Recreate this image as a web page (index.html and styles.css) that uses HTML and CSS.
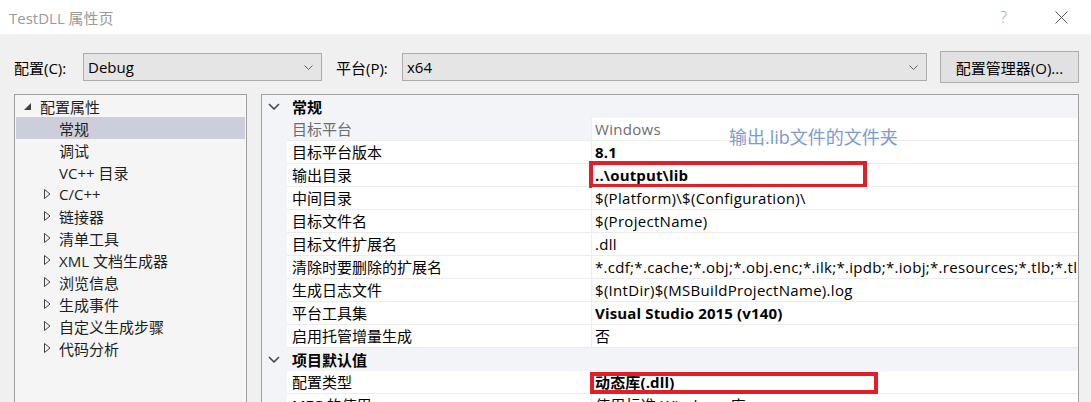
FILE: index.html
```html
<!DOCTYPE html>
<html>
<head>
    <meta charset="UTF-8">
    <title>TestDLL 属性页</title>
    <link rel="stylesheet" href="styles.css">
</head>
<body>
<div class="titlebar">
    <span class="title">TestDLL 属性页</span>
    <span class="help">?</span>
    <svg class="close" width="13" height="13" viewBox="0 0 13 13">
        <path d="M0.5 0.5 L12.5 12.5 M12.5 0.5 L0.5 12.5" stroke="#555" stroke-width="1" fill="none"/>
    </svg>
</div>
<div class="dialog">
    <div class="toolbar">
        <label class="lbl lbl-config">配置(C):</label>
        <div class="combo combo-config">
            <span>Debug</span>
            <svg width="9" height="5" viewBox="0 0 9 5"><path d="M0.5 0.5 L4.5 4.5 L8.5 0.5" stroke="#606060" fill="none"/></svg>
        </div>
        <label class="lbl lbl-platform">平台(P):</label>
        <div class="combo combo-platform">
            <span>x64</span>
            <svg width="9" height="5" viewBox="0 0 9 5"><path d="M0.5 0.5 L4.5 4.5 L8.5 0.5" stroke="#606060" fill="none"/></svg>
        </div>
        <button class="btn">配置管理器(O)...</button>
    </div>

    <div class="panes">
        <ul class="tree">
            <li class="node top"><span class="arrow"><svg width="7" height="7" viewBox="0 0 7 7"><path d="M7 0 L7 7 L0 7 Z" fill="#404040"/></svg></span>配置属性</li>
            <li class="node selected"><span class="arrow"></span>常规</li>
            <li class="node"><span class="arrow"></span>调试</li>
            <li class="node"><span class="arrow"></span>VC++ 目录</li>
            <li class="node"><span class="arrow"><svg width="7" height="10" viewBox="0 0 7 10"><path d="M0.5 0.5 L6 5 L0.5 9.5 Z" stroke="#404040" fill="none"/></svg></span>C/C++</li>
            <li class="node"><span class="arrow"><svg width="7" height="10" viewBox="0 0 7 10"><path d="M0.5 0.5 L6 5 L0.5 9.5 Z" stroke="#404040" fill="none"/></svg></span>链接器</li>
            <li class="node"><span class="arrow"><svg width="7" height="10" viewBox="0 0 7 10"><path d="M0.5 0.5 L6 5 L0.5 9.5 Z" stroke="#404040" fill="none"/></svg></span>清单工具</li>
            <li class="node"><span class="arrow"><svg width="7" height="10" viewBox="0 0 7 10"><path d="M0.5 0.5 L6 5 L0.5 9.5 Z" stroke="#404040" fill="none"/></svg></span>XML 文档生成器</li>
            <li class="node"><span class="arrow"><svg width="7" height="10" viewBox="0 0 7 10"><path d="M0.5 0.5 L6 5 L0.5 9.5 Z" stroke="#404040" fill="none"/></svg></span>浏览信息</li>
            <li class="node"><span class="arrow"><svg width="7" height="10" viewBox="0 0 7 10"><path d="M0.5 0.5 L6 5 L0.5 9.5 Z" stroke="#404040" fill="none"/></svg></span>生成事件</li>
            <li class="node"><span class="arrow"><svg width="7" height="10" viewBox="0 0 7 10"><path d="M0.5 0.5 L6 5 L0.5 9.5 Z" stroke="#404040" fill="none"/></svg></span>自定义生成步骤</li>
            <li class="node"><span class="arrow"><svg width="7" height="10" viewBox="0 0 7 10"><path d="M0.5 0.5 L6 5 L0.5 9.5 Z" stroke="#404040" fill="none"/></svg></span>代码分析</li>
        </ul>

        <div class="grid">
            <div class="cat">
                <span class="gutter"><svg width="12" height="7" viewBox="0 0 12 7"><path d="M1 1 L6 6 L11 1" stroke="#404040" stroke-width="1.5" fill="none"/></svg></span>
                <span class="cat-name">常规</span>
            </div>
            <div class="row readonly">
                <span class="gutter"></span>
                <span class="name">目标平台</span>
                <span class="value">Windows</span>
            </div>
            <div class="row">
                <span class="gutter"></span>
                <span class="name">目标平台版本</span>
                <span class="value bold">8.1</span>
            </div>
            <div class="row">
                <span class="gutter"></span>
                <span class="name">输出目录</span>
                <span class="value bold">..\output\lib<span class="mark mark-out"></span></span>
            </div>
            <div class="row">
                <span class="gutter"></span>
                <span class="name">中间目录</span>
                <span class="value">$(Platform)\$(Configuration)\</span>
            </div>
            <div class="row">
                <span class="gutter"></span>
                <span class="name">目标文件名</span>
                <span class="value">$(ProjectName)</span>
            </div>
            <div class="row">
                <span class="gutter"></span>
                <span class="name">目标文件扩展名</span>
                <span class="value">.dll</span>
            </div>
            <div class="row">
                <span class="gutter"></span>
                <span class="name">清除时要删除的扩展名</span>
                <span class="value clip">*.cdf;*.cache;*.obj;*.obj.enc;*.ilk;*.ipdb;*.iobj;*.resources;*.tlb;*.tli;*.tlh;*.tmp;*.rsp;*.pgc;*.pgd</span>
            </div>
            <div class="row">
                <span class="gutter"></span>
                <span class="name">生成日志文件</span>
                <span class="value">$(IntDir)$(MSBuildProjectName).log</span>
            </div>
            <div class="row">
                <span class="gutter"></span>
                <span class="name">平台工具集</span>
                <span class="value bold">Visual Studio 2015 (v140)</span>
            </div>
            <div class="row">
                <span class="gutter"></span>
                <span class="name">启用托管增量生成</span>
                <span class="value">否</span>
            </div>
            <div class="cat">
                <span class="gutter"><svg width="12" height="7" viewBox="0 0 12 7"><path d="M1 1 L6 6 L11 1" stroke="#404040" stroke-width="1.5" fill="none"/></svg></span>
                <span class="cat-name">项目默认值</span>
            </div>
            <div class="row">
                <span class="gutter"></span>
                <span class="name">配置类型</span>
                <span class="value bold">动态库(.dll)<span class="mark mark-type"></span></span>
            </div>
            <div class="row">
                <span class="gutter"></span>
                <span class="name">MFC 的使用</span>
                <span class="value">使用标准 Windows 库</span>
            </div>

            <div class="note">输出.lib文件的文件夹</div>
        </div>
    </div>
</div>
</body>
</html>
```

FILE: styles.css
```css
body {
    margin: 0;
    width: 1091px;
    height: 402px;
    overflow: hidden;
    background-color: #f0f0f0;
    font-family: "Open Sans", "Noto Sans CJK SC", sans-serif;
    font-size: 15px;
    color: #000;
}

/* window title */
.titlebar {
    height: 34px;
    background-color: #fff;
    display: flex;
    align-items: center;
    padding-left: 9px;
}

.title {
    flex: 1;
    color: #999;
}

.help {
    color: #a0a0a0;
    font-size: 16px;
    font-weight: 300;
    margin-right: 48px;
}

.close {
    margin-right: 23px;
}

/* configuration row */
.dialog {
    padding: 0 12px 0 14px;
}

.toolbar {
    display: flex;
    align-items: center;
    height: 32px;
    margin-top: 17px;
}

.lbl {
    white-space: nowrap;
}

.lbl-config {
    width: 69px;
}

.lbl-platform {
    width: 66px;
    margin-left: 14px;
}

.combo {
    box-sizing: border-box;
    height: 28px;
    background-color: #e5e5e5;
    border: 1px solid #acacac;
    display: flex;
    align-items: center;
    justify-content: space-between;
    padding: 0 8px 0 4px;
}

.combo-config {
    width: 239px;
}

.combo-platform {
    width: 525px;
}

.btn {
    box-sizing: border-box;
    width: 139px;
    height: 32px;
    margin-left: 13px;
    background-color: #e1e1e1;
    border: 1px solid #adadad;
    font-family: inherit;
    font-size: 15px;
    color: #000;
    padding: 0;
}

/* panes */
.panes {
    display: flex;
    margin-top: 11px;
}

.tree {
    box-sizing: border-box;
    width: 233px;
    height: 330px;
    flex: none;
    margin: 0;
    padding: 0;
    list-style: none;
    background-color: #f5f5f5;
    border: 1px solid #a0a0a0;
    color: #1e1e1e;
}

.node {
    display: flex;
    align-items: center;
    height: 22px;
    margin: 0 1px;
    padding-left: 28px;
    white-space: nowrap;
}

.node.top {
    padding-left: 8px;
}

.node.selected {
    background-color: #cccedb;
}

.arrow {
    width: 15px;
    display: flex;
    align-items: center;
}

.node.top .arrow {
    width: 16px;
}

.grid {
    position: relative;
    box-sizing: border-box;
    width: 818px;
    height: 330px;
    flex: none;
    margin-left: 14px;
    background-color: #f3f4f7;
    border: 1px solid #a0a0a0;
    overflow: hidden;
}

.cat {
    display: flex;
    align-items: center;
    height: 23px;
    font-weight: bold;
}

.gutter {
    width: 25px;
    flex: none;
    display: flex;
    align-items: center;
    padding-left: 6px;
    box-sizing: border-box;
}

.cat-name {
    padding-left: 5px;
}

.row {
    display: flex;
    height: 23px;
    line-height: 22px;
}

.name {
    box-sizing: border-box;
    width: 305px;
    flex: none;
    padding-left: 5px;
    background-color: #fff;
    border-right: 1px solid #ececec;
    border-bottom: 1px solid #ececec;
    white-space: nowrap;
}

.value {
    position: relative;
    flex: 1;
    min-width: 0;
    padding-left: 3px;
    background-color: #fff;
    border-bottom: 1px solid #ececec;
    white-space: nowrap;
    letter-spacing: 0.3px;
}

.value.clip {
    overflow: hidden;
}

.bold {
    font-weight: bold;
    letter-spacing: 0.15px;
}

.readonly .name {
    background-color: #f3f4f7;
    color: #6d6d6d;
}

.readonly .value {
    color: #6d6d6d;
}

/* red highlight boxes */
.mark {
    position: absolute;
    box-sizing: border-box;
    border: 4px solid #e31e26;
}

.mark-out {
    left: -3px;
    top: -3px;
    width: 278px;
    height: 27px;
}

.mark-type {
    left: -2px;
    top: 1px;
    width: 288px;
    height: 22px;
}

.note {
    position: absolute;
    left: 467px;
    top: 32px;
    font-size: 18px;
    line-height: 20px;
    color: #7d9bcd;
}
```
